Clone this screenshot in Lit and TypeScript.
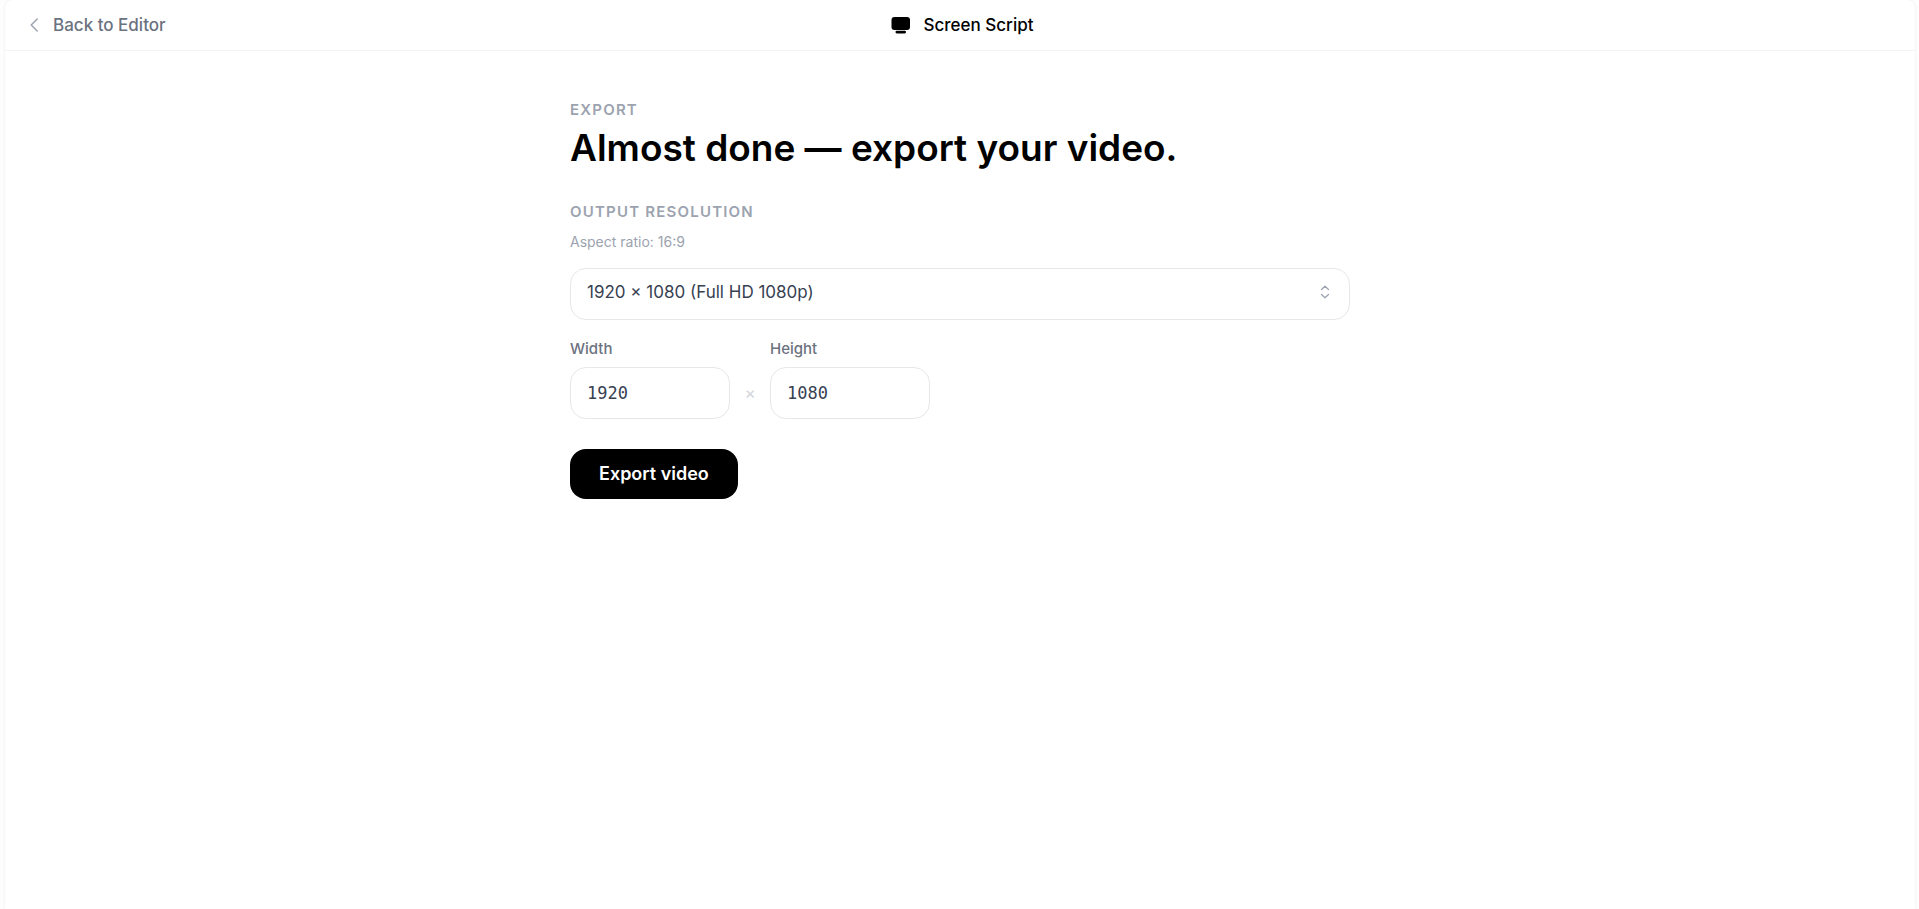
import { LitElement, html, css } from "lit";
import { customElement, state } from "lit/decorators.js";

@customElement("app-root")
export class AppRoot extends LitElement {
  @state() private videoWidth = 1920;
  @state() private videoHeight = 1080;

  static styles = css`
    :host {
      display: block;
      box-sizing: border-box;
      min-height: 100vh;
      padding: 0 4px 0 5px;
      background: #fdfdfd;
      color: #000;
      font-family: Inter, "Noto Sans", sans-serif;
    }
    * {
      box-sizing: border-box;
    }
    .page {
      min-height: 100vh;
      border-radius: 8px 8px 0 0;
      background: #fff;
      box-shadow: 0 0 3px rgb(0 0 0 / 8%);
    }
    .bar {
      display: grid;
      grid-template-columns: 1fr auto 1fr;
      align-items: center;
      height: 51px;
      padding: 0 16px 0 20px;
      border-bottom: 1px solid #f3f4f6;
    }
    .back {
      display: flex;
      align-items: center;
      justify-self: start;
      gap: 8px;
      color: #6b7280;
      font-size: 17px;
      font-weight: 500;
      line-height: 24px;
      text-decoration: none;
    }
    .chevron {
      width: 20px;
      height: 20px;
      color: #9ca3af;
    }
    .brand {
      display: flex;
      align-items: center;
      gap: 14px;
      font-size: 17px;
      font-weight: 500;
      line-height: 24px;
    }
    .logo {
      width: 19px;
      height: 20px;
    }
    .content {
      max-width: 780px;
      margin: 0 auto;
      padding: 47px 0;
    }
    .eyebrow {
      display: block;
      margin: 0;
      color: #9ca3af;
      font-size: 15px;
      font-weight: 600;
      line-height: 24px;
      letter-spacing: 0.08em;
      text-transform: uppercase;
    }
    .title {
      margin: 0 0 26px;
      font-size: 37px;
      font-weight: 600;
      line-height: 52px;
    }
    .hint {
      margin: 4px 0 12px;
      color: #9ca3af;
      font-size: 14px;
      line-height: 28px;
    }
    .picker {
      display: grid;
      align-items: center;
    }
    .picker > * {
      grid-area: 1 / 1;
    }
    .arrows {
      justify-self: end;
      width: 16px;
      height: 16px;
      margin: 0 17px 4px 0;
      color: #9ca3af;
      pointer-events: none;
    }
    .field {
      width: 100%;
      height: 52px;
      margin: 0;
      padding: 0 16px;
      border: 1px solid #e5e7eb;
      border-radius: 16px;
      background: #fff;
      color: #374151;
      font: 17px/24px Inter, "Noto Sans", sans-serif;
      appearance: none;
      outline: none;
    }
    .choice {
      padding-bottom: 4px;
    }
    .number {
      font-family: "DejaVu Sans Mono", monospace;
    }
    .size {
      display: grid;
      grid-template-columns: 160px 40px 160px;
      row-gap: 6px;
      margin: 17px 0 30px;
    }
    .label {
      color: #6b7280;
      font-size: 15px;
      font-weight: 500;
      line-height: 24px;
    }
    .height-label {
      grid-column: 3;
    }
    .times {
      place-self: center;
      color: #d1d5db;
      font-size: 17px;
      line-height: 24px;
    }
    .export {
      height: 50px;
      padding: 0 29px;
      border: 0;
      border-radius: 16px;
      background: #000;
      color: #fff;
      font: 600 18px/24px Inter, "Noto Sans", sans-serif;
      cursor: pointer;
    }
  `;

  private pickResolution(e: Event) {
    const [w, h] = (e.target as HTMLSelectElement).value.split("x").map(Number);
    this.videoWidth = w;
    this.videoHeight = h;
  }

  render() {
    return html`
      <div class="page">
        <header class="bar">
          <a class="back" href="#editor">
            <svg class="chevron" viewBox="0 0 20 20" fill="none" stroke="currentColor" stroke-width="1.5" stroke-linecap="round" stroke-linejoin="round" aria-hidden="true">
              <path d="M12.2 4 6.2 10l6 6" />
            </svg>
            <span>Back to Editor</span>
          </a>
          <div class="brand">
            <svg class="logo" viewBox="0 0 19 20" fill="currentColor" aria-hidden="true">
              <rect x="0.5" y="2" width="18.5" height="13" rx="3" />
              <rect x="4.5" y="15.8" width="10.5" height="2.6" rx="1.3" />
            </svg>
            <span>Screen Script</span>
          </div>
        </header>
        <main class="content">
          <p class="eyebrow">Export</p>
          <h1 class="title">Almost done — export your video.</h1>
          <label class="eyebrow" for="resolution">Output resolution</label>
          <p class="hint">Aspect ratio: 16:9</p>
          <div class="picker">
            <select class="field choice" id="resolution" @change=${this.pickResolution}>
              <option value="1920x1080">1920 × 1080 (Full HD 1080p)</option>
            </select>
            <svg class="arrows" viewBox="0 0 16 16" fill="none" stroke="currentColor" stroke-width="1.3" stroke-linecap="round" stroke-linejoin="round" aria-hidden="true">
              <path d="m4.5 5.5 3.5-3.2 3.5 3.2M4.5 10.5 8 13.7l3.5-3.2" />
            </svg>
          </div>
          <div class="size">
            <label class="label" for="width">Width</label>
            <label class="label height-label" for="height">Height</label>
            <input class="field number" id="width" inputmode="numeric" .value=${String(this.videoWidth)} />
            <span class="times">×</span>
            <input class="field number" id="height" inputmode="numeric" .value=${String(this.videoHeight)} />
          </div>
          <button class="export" type="button">Export video</button>
        </main>
      </div>
    `;
  }
}
